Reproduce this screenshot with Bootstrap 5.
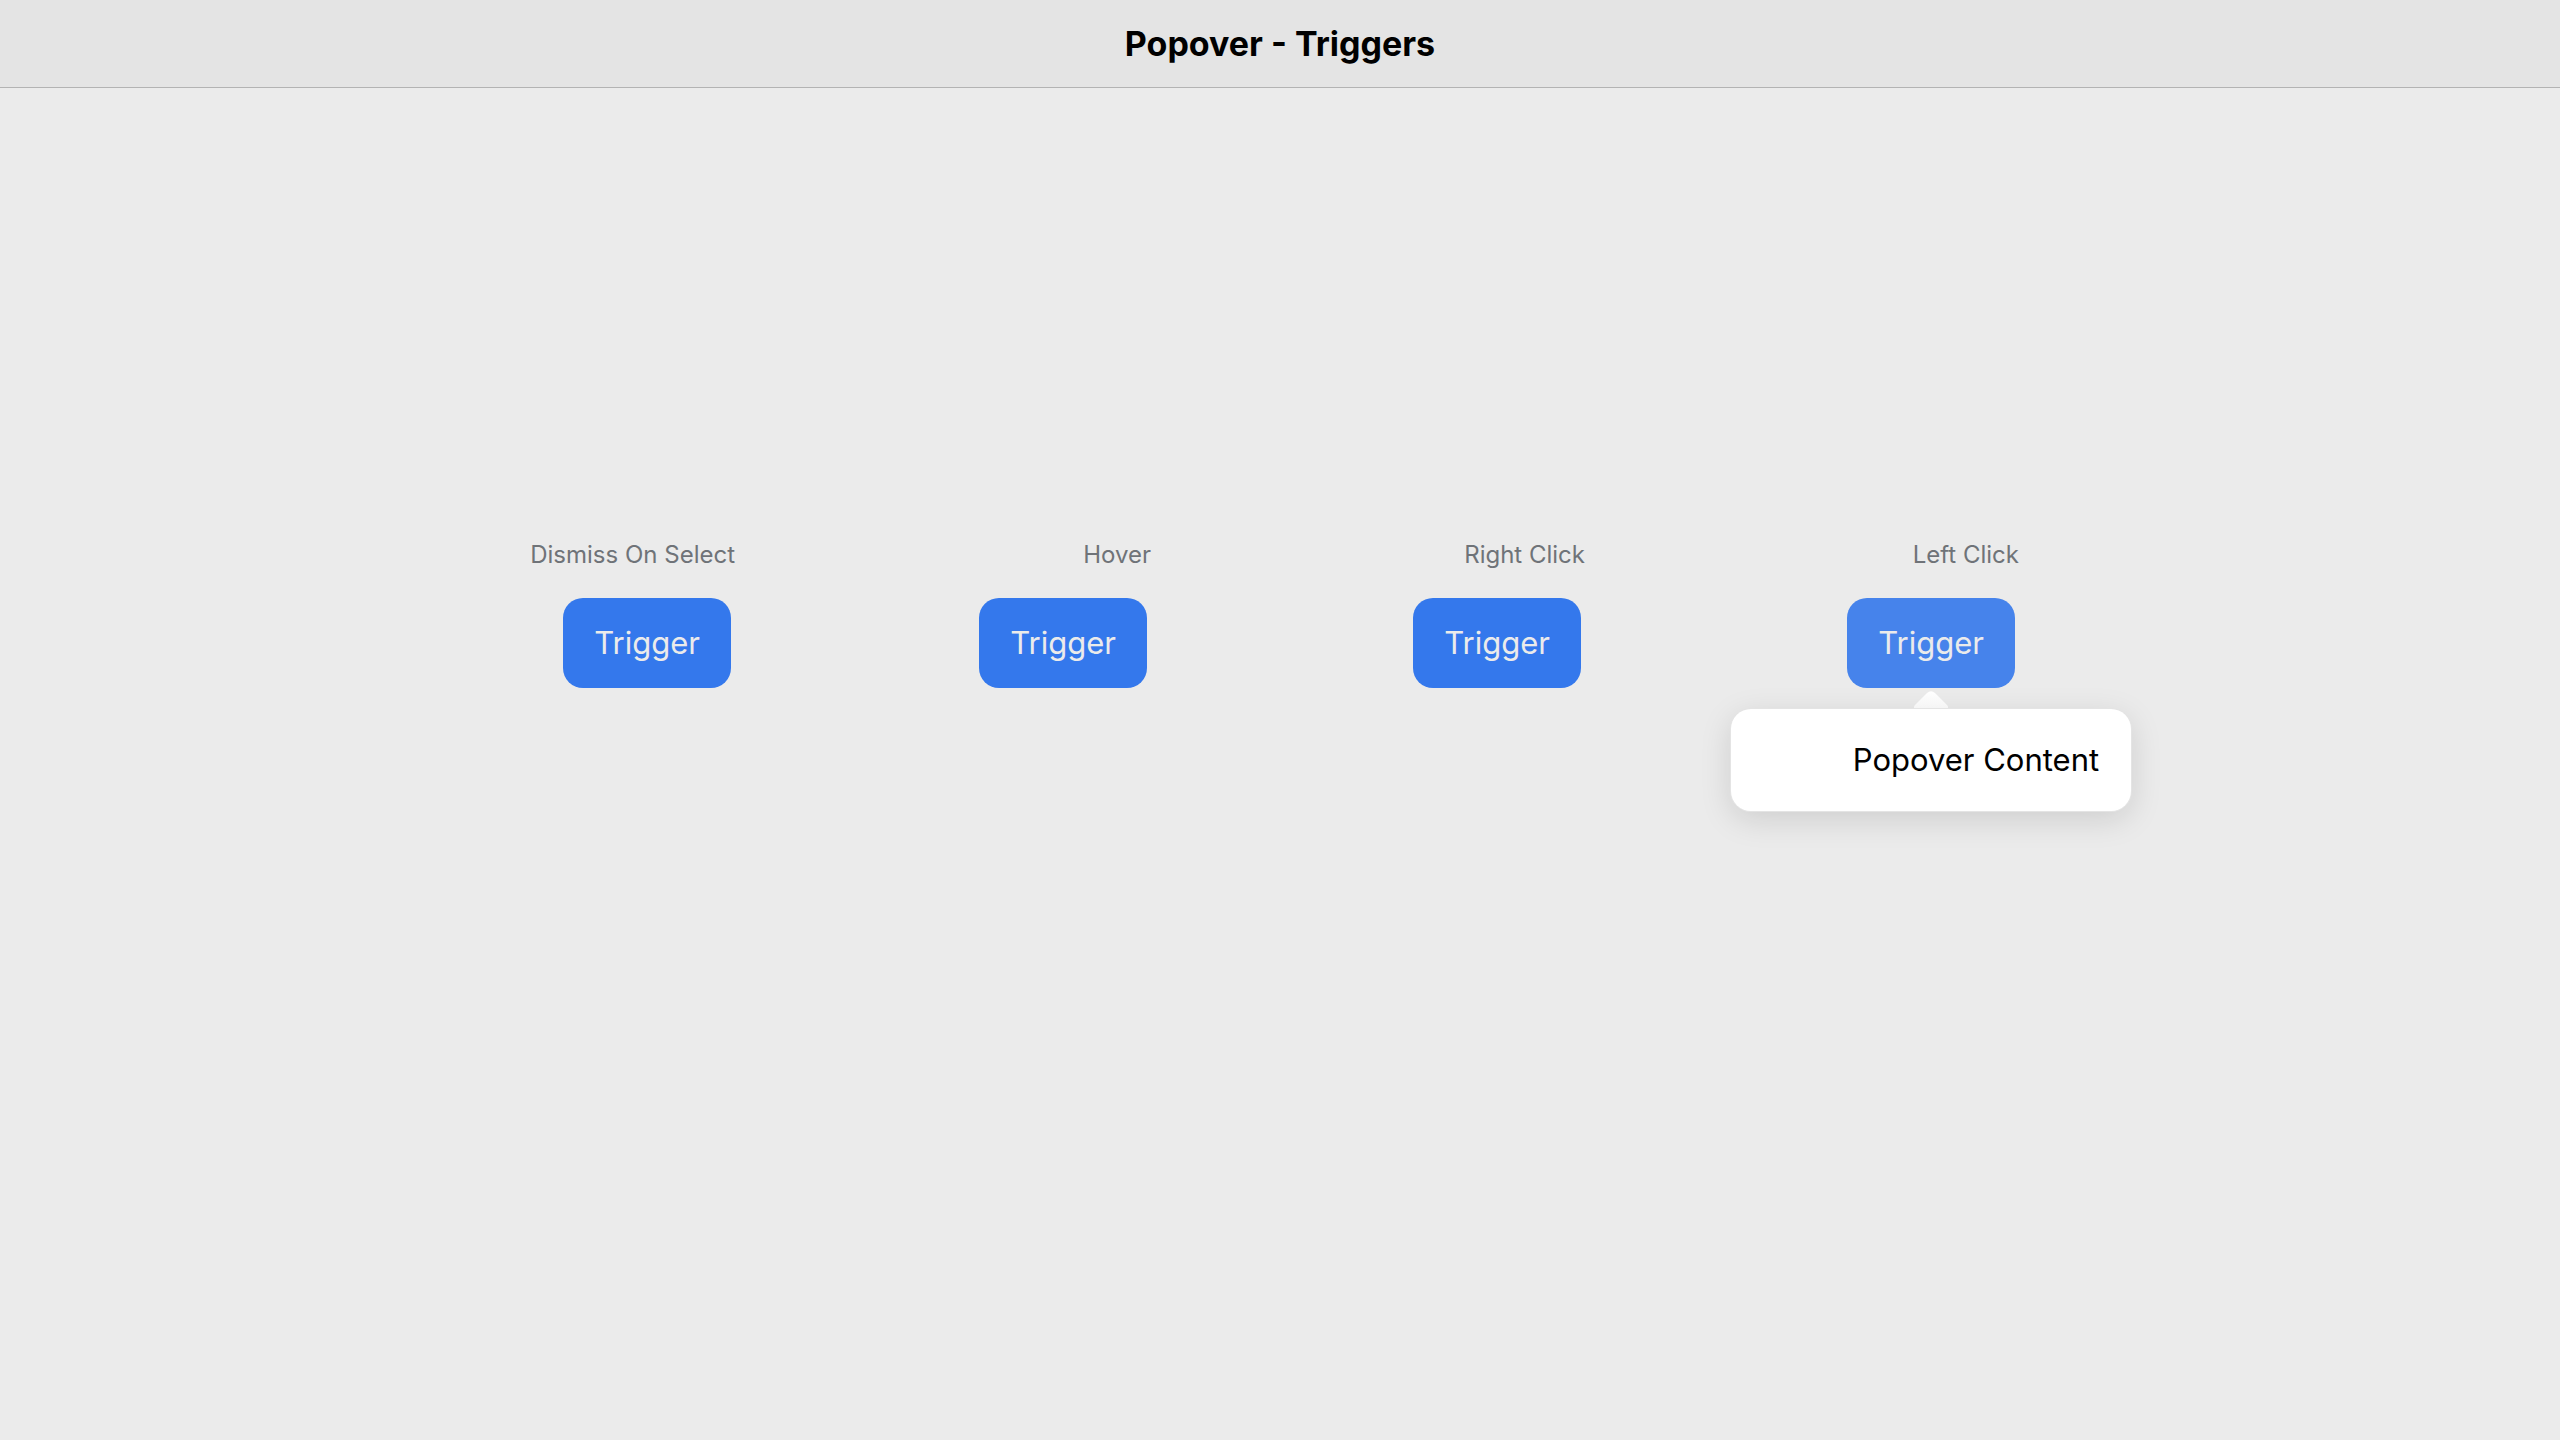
<!DOCTYPE html>
<html lang="en">
<head>
<meta charset="utf-8">
<meta name="viewport" content="width=device-width, initial-scale=1">
<title>Popover - Triggers</title>
<link href="https://cdn.jsdelivr.net/npm/bootstrap@5.3.0/dist/css/bootstrap.min.css" rel="stylesheet">
<style>
  body {
    font-family: Inter, "Liberation Sans", sans-serif;
    background: #ebebeb;
    color: #000;
  }
  .app-bar {
    min-height: 88px;
    background: #e4e4e4;
    border-bottom: 1px solid #b3b3b3;
  }
  .app-title {
    font-size: 34px;
    line-height: 40px;
    font-weight: 700;
    color: #000;
  }
  .trigger-grid {
    display: grid;
    grid-template-columns: 735fr 416fr 434fr 434fr 541fr;
    padding-top: 452px;
  }
  .trigger-label {
    font-size: 24px;
    line-height: 30px;
    font-weight: 400;
    color: #6f7378;
    margin-bottom: 28px;
  }
  .trigger-btn {
    --bs-btn-color: #ebebeb;
    --bs-btn-bg: #3478ec;
    --bs-btn-border-width: 0;
    --bs-btn-hover-color: #ebebeb;
    --bs-btn-hover-bg: #4683eb;
    --bs-btn-active-color: #ebebeb;
    --bs-btn-active-bg: #4683eb;
    --bs-btn-font-size: 31px;
    --bs-btn-line-height: 38px;
    --bs-btn-padding-x: 31px;
    --bs-btn-padding-y: 26px;
    --bs-btn-border-radius: 20px;
  }
  .popover-panel {
    top: calc(100% + 21px);
    width: 400px;
    padding: 32px;
    border-radius: 20px;
    background: #fff;
    font-size: 31px;
    line-height: 38px;
    box-shadow: 0 0 0 1px #e4e4e4, 0 8px 32px rgba(0, 0, 0, .13);
  }
  .popover-tip {
    bottom: 100%;
  }
</style>
<script src="https://cdn.jsdelivr.net/npm/bootstrap@5.3.0/dist/js/bootstrap.bundle.min.js"></script>
</head>
<body class="d-flex flex-column min-vh-100">
  <header class="app-bar d-flex align-items-center justify-content-center">
    <h1 class="app-title m-0">Popover - Triggers</h1>
  </header>
  <main class="trigger-grid">
    <section class="d-flex flex-column align-items-end">
      <h2 class="trigger-label mt-0" id="label-dismiss">Dismiss On Select</h2>
      <button type="button" class="btn trigger-btn me-1" aria-describedby="label-dismiss">Trigger</button>
    </section>
    <section class="d-flex flex-column align-items-end">
      <h2 class="trigger-label mt-0" id="label-hover">Hover</h2>
      <button type="button" class="btn trigger-btn me-1" aria-describedby="label-hover">Trigger</button>
    </section>
    <section class="d-flex flex-column align-items-end">
      <h2 class="trigger-label mt-0" id="label-right">Right Click</h2>
      <button type="button" class="btn trigger-btn me-1" aria-describedby="label-right">Trigger</button>
    </section>
    <section class="d-flex flex-column align-items-end">
      <h2 class="trigger-label mt-0" id="label-left">Left Click</h2>
      <div class="position-relative me-1">
        <button type="button" class="btn trigger-btn active" aria-describedby="label-left" aria-expanded="true">Trigger</button>
        <div class="popover-panel position-absolute start-50 translate-middle-x text-end text-nowrap" role="dialog" aria-label="Popover Content">
          <svg class="popover-tip position-absolute start-50 translate-middle-x" width="34" height="18" viewBox="0 0 34 18" aria-hidden="true">
            <defs>
              <linearGradient id="tip-fill" x1="0" y1="0" x2="0" y2="1">
                <stop offset="0" stop-color="#fff"/>
                <stop offset="1" stop-color="#f5f5f5"/>
              </linearGradient>
            </defs>
            <path d="M0 17v-1.500Q0 15 1 14L13 2Q17-1.500 21 2L33 14Q34 15 34 15.500V17Z" fill="url(#tip-fill)"/>
          </svg>
          Popover Content
        </div>
      </div>
    </section>
  </main>
</body>
</html>
